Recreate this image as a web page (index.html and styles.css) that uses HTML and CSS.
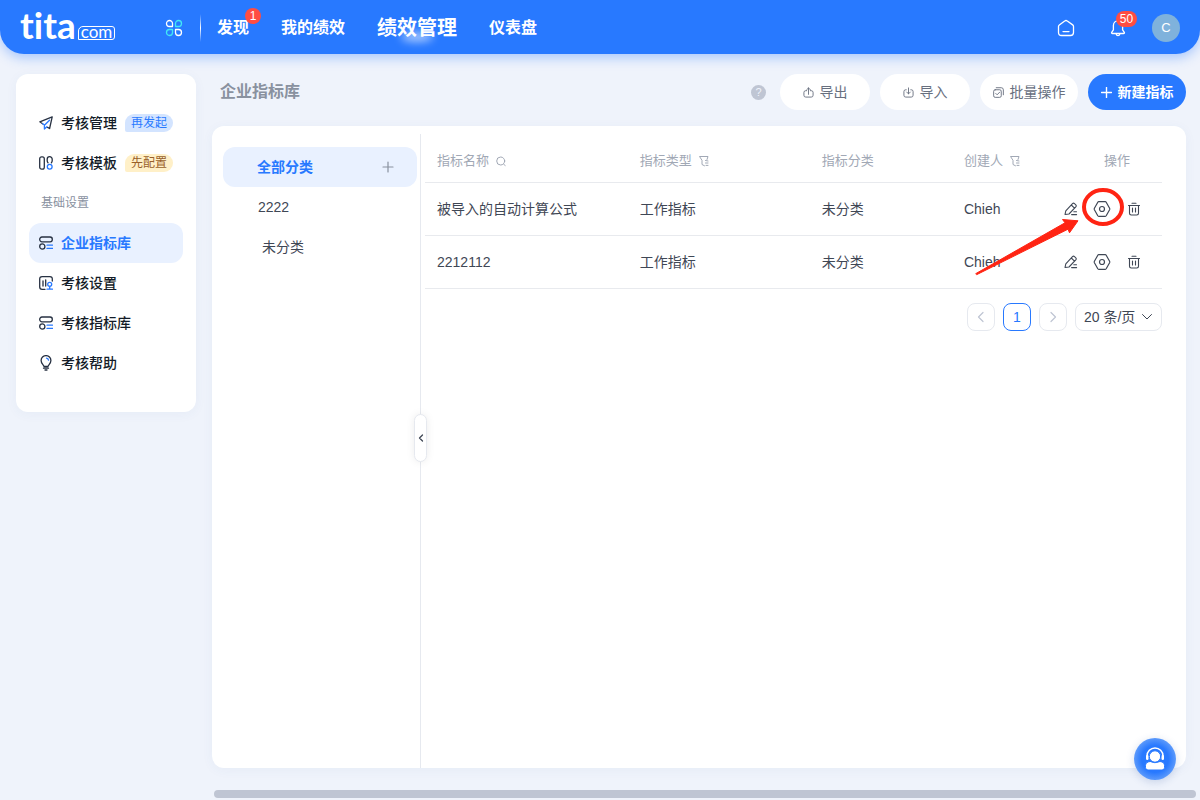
FILE: index.html
```html
<!DOCTYPE html>
<html lang="zh-CN">
<head>
<meta charset="utf-8">
<meta name="viewport" content="width=device-width, initial-scale=1">
<title>企业指标库</title>
<link rel="stylesheet" href="styles.css">
</head>
<body>
<svg class="sprite" aria-hidden="true">
  <symbol id="i-library" viewBox="0 0 14 14"><rect x=".7" y="1" width="12.6" height="4.8" rx="2.2"/><circle cx="3.3" cy="10.5" r="2.6"/><path class="accent" d="M8 9.2h5.6M8 12.4h5.6"/></symbol>
  <symbol id="i-filter" viewBox="0 0 12 12"><path d="M9 4.500 10 1.500H1.500L4 5.300v4.200l2.500 1.300M7.500 5.500l2.500.5M7.500 8H10M8 10.400h2"/></symbol>
  <symbol id="i-edit" viewBox="0 0 14 14"><path d="m1 12.5.8-3.700 6.700-7.200a1.500 1.500 0 0 1 2 0l1.300 1.200a1.500 1.500 0 0 1 0 2L5 12l-4 .5ZM7.300 3l3.200 3.100M9.800 9.700h2.700M7.600 12.600h5"/></symbol>
  <symbol id="i-hex" viewBox="0 0 18 18"><path d="M5.700 1.700h6.600q.6 0 .9.500l3.400 6q.4.800 0 1.600l-3.400 6q-.3.500-.9.500H5.700q-.6 0-.9-.5l-3.400-6q-.4-.8 0-1.600l3.400-6q.3-.5.9-.5Z"/><circle cx="9" cy="9" r="2.500"/></symbol>
  <symbol id="i-trash" viewBox="0 0 14 14"><path d="M1.500 3.500h11M5 1.200h4M2.500 3.500v7.800q0 1.700 1.700 1.700h5.600q1.700 0 1.700-1.700V3.500M5.500 6v4M8.500 6v4"/></symbol>
</svg>

<header class="topbar">
  <a class="logo" href="#" aria-label="tita.com"><span class="logo-name">tita</span><span class="logo-com">com</span></a>
  <button class="icon-button apps" aria-label="应用">
    <svg viewBox="0 0 18 18"><path d="M4.500 1.500A3 3 0 1 0 4.500 7.500H7.500V4.500A3 3 0 0 0 4.500 1.500ZM13.500 16.500a3 3 0 1 0 0-6H10.500v3a3 3 0 0 0 3 3Z"/><path class="cyan" d="M10.500 7.500V4.500A3 3 0 1 1 13.500 7.500ZM7.500 10.500v3A3 3 0 1 1 4.500 10.500Z"/></svg>
  </button>
  <span class="topbar-divider"></span>
  <nav class="main-nav">
    <a href="#">发现<span class="badge badge-nav">1</span></a>
    <a href="#">我的绩效</a>
    <a href="#" class="current" aria-current="page">绩效管理</a>
    <a href="#">仪表盘</a>
  </nav>
  <div class="tools">
    <button class="icon-button" aria-label="首页"><svg viewBox="0 0 18 18"><path d="M1.500 7.500q0-1 .8-1.600L7.700 2q1.300-1 2.600 0l5.400 3.900q.8.600.8 1.600v6q0 3-3 3h-9q-3 0-3-3ZM6 12.600h6"/></svg></button>
    <button class="icon-button" aria-label="通知"><svg viewBox="0 0 18 18"><path d="M9 1.800c2.800 0 4.600 2 4.600 4.700v4.300l1.700 2.500q.5 1.200-.8 1.200h-11q-1.300 0-.8-1.200l1.700-2.500V6.500c0-2.700 1.800-4.700 4.600-4.700ZM7.200 15.200q.3 1.500 1.800 1.500t1.800-1.500"/></svg><span class="badge badge-bell">50</span></button>
    <button class="avatar" aria-label="账户">C</button>
  </div>
</header>

<div class="layout">
  <aside class="sidebar">
    <a href="#"><svg class="nav-icon" viewBox="0 0 14 14"><path d="M13.200.9 10.600 12.500 8.600 11.400M3.600 7.800.8 5.800 13.200.900"/><path class="accent" d="M5.400 13V9.300L10.500 4.200M5.400 13l2.500-2.300M3.600 7.800l1.600 1"/></svg>考核管理<span class="tag tag-blue">再发起</span></a>
    <a href="#"><svg class="nav-icon" viewBox="0 0 14 14"><rect x=".7" y=".9" width="4.600" height="12.200" rx="1.900"/><path d="M9 6.800a2.700 2.700 0 0 1-.8-2V3.200a2.400 2.400 0 0 1 5 0v1.600q0 1.200-.8 2"/><circle class="accent" cx="10.700" cy="10.800" r="2.400"/></svg>考核模板<span class="tag tag-yellow">先配置</span></a>
    <h2>基础设置</h2>
    <a href="#" class="selected" aria-current="page"><svg class="nav-icon"><use href="#i-library"/></svg>企业指标库</a>
    <a href="#"><svg class="nav-icon" viewBox="0 0 14 14"><path d="M13.300 5V3.100Q13.300.7 10.900.7H3.100Q.7.7.7 3.100v7.800q0 2.400 2.400 2.400H6M4 5v5M6.700 3.800V10"/><circle class="accent" cx="10.700" cy="8.300" r="2"/><path class="accent" d="M10.700 10.300v2.900M8 13.200h5.500"/></svg>考核设置</a>
    <a href="#"><svg class="nav-icon"><use href="#i-library"/></svg>考核指标库</a>
    <a href="#"><svg class="nav-icon nav-icon-bulb" viewBox="0 0 14 16"><path d="M5 11.500c-.2-1.700-2.900-2.800-2.900-6a4.900 4.900 0 0 1 9.800 0c0 3.200-2.700 4.300-2.900 6ZM4.500 13.200h5M6 15h2"/><path class="accent" d="M7.500 3.200q1.700.2 2 1.900"/></svg>考核帮助</a>
  </aside>

  <main class="content">
    <div class="page-head">
      <h1>企业指标库</h1>
      <button class="help" aria-label="帮助">?</button>
      <button class="pill"><svg class="pill-icon" viewBox="0 0 12 12"><path d="M4 4H3Q1 4 1 6v3q0 2 2 2h6q2 0 2-2V6q0-2-2-2H8M6 8V1M4 3l2-2 2 2"/></svg>导出</button>
      <button class="pill"><svg class="pill-icon" viewBox="0 0 12 12"><path d="M3.500 3H3Q1 3 1 5v4q0 2 2 2h6q2 0 2-2V5q0-2-2-2h-.5M6 1v6.500M4 5.500l2 2 2-2"/></svg>导入</button>
      <button class="pill pill-wide"><svg class="pill-icon" viewBox="0 0 12 12"><rect x=".7" y="3" width="8.300" height="8.300" rx="1.700"/><path d="M3.500.8H9q2.300 0 2.300 2.300v5.400M3 7l1.500 1.500L7.300 5.600"/></svg>批量操作</button>
      <button class="pill pill-wide primary"><svg class="pill-icon" viewBox="0 0 12 12"><path d="M6 .5v11M.5 6h11"/></svg>新建指标</button>
    </div>

    <section class="card">
      <div class="categories">
        <div class="category selected"><a href="#">全部分类</a><button aria-label="新增分类"><svg viewBox="0 0 12 12"><path d="M6 1v10M1 6h10"/></svg></button></div>
        <div class="category"><a href="#">2222</a></div>
        <div class="category unsorted"><a href="#">未分类</a></div>
        <button class="collapse" aria-label="收起"><svg viewBox="0 0 6 8"><path d="M4.500 1 1.500 4l3 3"/></svg></button>
      </div>

      <div class="results">
        <table>
          <colgroup><col class="col-name"><col class="col-type"><col class="col-category"><col class="col-creator"><col class="col-actions"></colgroup>
          <thead>
            <tr>
              <th>指标名称<svg class="head-icon" viewBox="0 0 12 12"><circle cx="5.700" cy="6" r="4"/><path d="m8.700 9.300 1.500 1.200"/></svg></th>
              <th>指标类型<svg class="head-icon"><use href="#i-filter"/></svg></th>
              <th>指标分类</th>
              <th>创建人<svg class="head-icon"><use href="#i-filter"/></svg></th>
              <th class="actions-head">操作</th>
            </tr>
          </thead>
          <tbody>
            <tr>
              <td>被导入的自动计算公式</td><td>工作指标</td><td>未分类</td><td>Chieh</td>
              <td class="actions-cell">
                <div class="actions">
                  <button aria-label="编辑"><svg class="small"><use href="#i-edit"/></svg></button>
                  <button aria-label="设置"><svg><use href="#i-hex"/></svg></button>
                  <button aria-label="删除"><svg class="small"><use href="#i-trash"/></svg></button>
                </div>
                <svg class="callout" viewBox="0 0 160 96" aria-hidden="true"><ellipse cx="133" cy="24" rx="19" ry="17"/><path d="M6 90.500 95 39.800l-2.500-3.300 15.500 1.300-8.500 12-1.500-3.600L7 91.500Z"/></svg>
              </td>
            </tr>
            <tr>
              <td>2212112</td><td>工作指标</td><td>未分类</td><td>Chieh</td>
              <td class="actions-cell">
                <div class="actions">
                  <button aria-label="编辑"><svg class="small"><use href="#i-edit"/></svg></button>
                  <button aria-label="设置"><svg><use href="#i-hex"/></svg></button>
                  <button aria-label="删除"><svg class="small"><use href="#i-trash"/></svg></button>
                </div>
              </td>
            </tr>
          </tbody>
        </table>
        <nav class="pager" aria-label="分页">
          <button class="page" disabled aria-label="上一页"><svg viewBox="0 0 12 12"><path d="M8 1.500 3.500 6 8 10.500"/></svg></button>
          <button class="page active" aria-current="page">1</button>
          <button class="page" disabled aria-label="下一页"><svg viewBox="0 0 12 12"><path d="M4 1.500 8.500 6 4 10.500"/></svg></button>
          <div class="page-size">
            <select aria-label="每页条数"><option>20 条/页</option><option>50 条/页</option></select>
            <svg viewBox="0 0 12 12"><path d="M1.500 3.500 6 8l4.500-4.500"/></svg>
          </div>
        </nav>
      </div>
    </section>
  </main>
</div>
<div class="scroll-track"><div class="scroll-thumb"></div></div>
<button class="support" aria-label="客服"><svg viewBox="0 0 22 24"><path class="band" d="M3 10.500V9a8 8 0 0 1 16 0v1.500"/><rect class="ear" x="2" y="8" width="2.500" height="5" rx="1.200"/><rect class="ear" x="17.500" y="8" width="2.500" height="5" rx="1.200"/><circle cx="11" cy="9.500" r="5.700"/><path d="M6 14.500q5 2.500 10 0 4.500.5 4.500 4v2q0 2.500-2.500 2.500H4q-2.500 0-2.500-2.500v-2q0-3.500 4.500-4Z"/></svg></button>
</body>
</html>
```
FILE: styles.css
```css
* { box-sizing: border-box; }

body {
  display: flex;
  flex-direction: column;
  min-height: 100vh;
  margin: 0;
  background: #eff3fb;
  color: #3f4755;
  font: 14px/20px "Liberation Sans", "Noto Sans CJK SC", sans-serif;
}

a { color: inherit; text-decoration: none; }
button { padding: 0; border: 0; background: none; color: inherit; font: inherit; cursor: pointer; }
svg { flex: none; fill: none; stroke: currentColor; stroke-linecap: round; stroke-linejoin: round; }
.sprite { position: absolute; width: 0; height: 0; }
.accent { stroke: #2879ff; }

/* Top bar */
.topbar {
  display: flex;
  align-items: center;
  height: 54px;
  padding: 2px 20px 0;
  border-radius: 0 0 24px 24px;
  background: #2879ff;
  box-shadow: 0 4px 12px rgba(40, 121, 255, .35);
  color: #fff;
}
.logo { display: flex; align-items: flex-end; gap: 2px; width: 98px; height: 24px; }
.logo-name { padding-bottom: 2px; font: bold 37px/26px Lato, sans-serif; font-variant-ligatures: none; }
.logo-com {
  height: 14px;
  padding: 0 2px;
  border: 1px solid #fff;
  border-radius: 5px 3px 3px 0;
  font: 17px/10px Lato, sans-serif;
}
.icon-button { position: relative; display: flex; }
.icon-button svg { width: 18px; height: 18px; stroke-width: 1.3; }
.apps { margin-left: 47px; }
.cyan { stroke: #42e8f5; }
.topbar-divider {
  width: 1px;
  height: 28px;
  margin: 0 16px 0 17px;
  background: linear-gradient(transparent, #fff, transparent);
}
.main-nav { display: flex; align-items: center; gap: 32px; font-size: 16px; font-weight: 700; line-height: 24px; white-space: nowrap; }
.main-nav a { position: relative; }
.main-nav .current { font-size: 20px; }
.main-nav .current::after {
  content: "";
  position: absolute;
  left: 24px;
  bottom: -2px;
  width: 32px;
  height: 10px;
  border-radius: 50%;
  background: rgba(255, 255, 255, .6);
  filter: blur(4px);
}
.badge {
  position: absolute;
  min-width: 16px;
  height: 16px;
  border-radius: 8px;
  background: #ff4d42;
  font-size: 12px;
  font-weight: 400;
  line-height: 16px;
  text-align: center;
}
.badge-nav { top: -8px; right: -12px; }
.badge-bell { top: -8px; left: 7px; width: 21px; }
.tools { display: flex; align-items: center; gap: 34px; margin-left: auto; }
.avatar { width: 28px; height: 28px; margin-left: -9px; border-radius: 50%; background: #7fb2dc; font-size: 13px; }

/* Page frame */
.layout { display: flex; flex: 1; align-items: stretch; gap: 16px; padding: 20px 14px 0 16px; }
.sidebar {
  align-self: flex-start;
  flex: none;
  width: 180px;
  padding: 29px 13px;
  border-radius: 12px;
  background: #fff;
  box-shadow: 0 2px 12px rgba(60, 90, 150, .05);
  color: #141c28;
  font-weight: 500;
}
.sidebar a { display: flex; align-items: center; height: 40px; padding-left: 10px; border-radius: 12px; white-space: nowrap; }
.sidebar h2 { margin: 0; padding-left: 12px; color: #89919f; font-size: 12px; font-weight: 400; line-height: 40px; }
.sidebar .selected { background: #e9f1ff; color: #2879ff; font-weight: 700; }
.nav-icon { width: 14px; height: 14px; margin-right: 8px; color: #273142; stroke-width: 1.3; }
.nav-icon-bulb { height: 16px; }
.tag { height: 18px; margin-left: 8px; padding: 0 6px; border-radius: 9px 9px 9px 2px; font-size: 12px; font-weight: 400; line-height: 18px; }
.tag-blue { background: #d3e4ff; color: #2879ff; }
.tag-yellow { background: #fff0c8; color: #99602a; }

.content { display: flex; flex: 1; flex-direction: column; min-width: 0; }
.page-head { display: flex; align-items: center; gap: 10px; height: 36px; margin-bottom: 16px; }
.page-head h1 { margin: 0 auto 0 8px; color: #89919f; font-size: 16px; font-weight: 700; line-height: 24px; }
.help { width: 15px; height: 15px; margin-right: 4px; border-radius: 50%; background: #bfc5d3; color: #eff3fb; font-size: 11px; line-height: 15px; }
.pill {
  display: flex;
  align-items: center;
  justify-content: center;
  gap: 6px;
  width: 90px;
  height: 36px;
  border-radius: 18px;
  background: #fff;
  color: #68707f;
  white-space: nowrap;
}
.pill-wide { width: 98px; }
.pill-icon { width: 11px; height: 11px; }
.primary { background: #2879ff; color: #fff; font-weight: 700; }
.primary .pill-icon { stroke-width: 1.5; }

/* Card */
.card { display: flex; flex: 1; border-radius: 12px; background: #fff; box-shadow: 0 2px 12px rgba(60, 90, 150, .05); }
.categories { position: relative; flex: none; width: 209px; margin-top: 8px; padding: 13px 3px 0 11px; border-right: 1px solid #e6e9ef; }
.category { display: flex; align-items: center; justify-content: space-between; height: 40px; padding: 0 23px 0 35px; border-radius: 12px; }
.category.selected { padding-left: 34px; background: #e9f1ff; color: #2879ff; font-weight: 700; }
.category.unsorted { padding-left: 39px; }
.category button { display: flex; color: #89919f; }
.category svg { width: 12px; height: 12px; stroke-width: 1.2; }
.collapse {
  position: absolute;
  top: 280px;
  right: -7px;
  display: flex;
  align-items: center;
  justify-content: center;
  width: 13px;
  height: 48px;
  border: 1px solid #e6e9ef;
  border-radius: 7px;
  background: #fff;
  box-shadow: 0 0 8px rgba(0, 0, 0, .08);
}
.collapse svg { width: 6px; height: 8px; stroke-width: 1.3; }

.results { flex: 1; min-width: 0; padding: 14px 24px 0 4px; }
table { width: 100%; border-collapse: separate; border-spacing: 0; table-layout: fixed; }
.col-name { width: 27.5%; }
.col-type { width: 24.7%; }
.col-category { width: 19.3%; }
.col-creator { width: 13.3%; }
th, td { padding: 0 12px; border-bottom: 1px solid #e8eaee; text-align: left; white-space: nowrap; }
th { height: 43px; color: #a1a8b5; font-size: 13px; font-weight: 400; }
td { height: 53px; }
.head-icon { width: 12px; height: 12px; margin-left: 6px; vertical-align: -2px; }
.actions-head { padding-right: 32px; text-align: right; }
.actions-cell { position: relative; }
.actions { display: flex; justify-content: flex-end; gap: 14px; padding-right: 7px; }
.actions button { display: flex; align-items: center; justify-content: center; width: 18px; height: 18px; }
.actions svg { width: 18px; height: 18px; stroke-width: 1.2; }
.actions .small { width: 14px; height: 14px; stroke-width: 1.1; }
.callout { position: absolute; z-index: 1; top: 0; right: 32px; width: 160px; height: 96px; pointer-events: none; }
.callout ellipse { stroke: #ff2413; stroke-width: 4; }
.callout path { fill: #ff2413; stroke: #ff2413; stroke-width: 1; }

.pager { display: flex; justify-content: flex-end; gap: 8px; margin-top: 14px; }
.page { display: flex; align-items: center; justify-content: center; width: 28px; height: 28px; border: 1px solid #e6e9ef; border-radius: 8px; color: #bfc5d3; }
.page svg { width: 12px; height: 12px; stroke-width: 1.2; }
.page.active { border-color: #2879ff; color: #2879ff; }
.page-size { position: relative; }
.page-size select { appearance: none; width: 87px; height: 28px; padding: 0 8px; border: 1px solid #e6e9ef; border-radius: 8px; background: #fff; color: inherit; font: inherit; }
.page-size svg { position: absolute; top: 8px; right: 9px; width: 12px; height: 12px; pointer-events: none; }

.scroll-track { padding: 22px 4px 2px 214px; }
.scroll-thumb { height: 8px; border-radius: 4px; background: #bfc5d3; }
.support {
  position: fixed;
  right: 24px;
  bottom: 20px;
  display: flex;
  align-items: center;
  justify-content: center;
  width: 42px;
  height: 42px;
  border-radius: 50%;
  background: radial-gradient(circle, #2879ff 45%, #5b99fb 70%);
  box-shadow: 0 2px 8px rgba(40, 80, 160, .2);
  color: #fff;
}
.support svg { width: 22px; height: 24px; fill: #fff; stroke: #2879ff; }
.support .band { fill: none; stroke: #fff; stroke-width: 1.5; }
.support .ear { stroke: none; }
```
